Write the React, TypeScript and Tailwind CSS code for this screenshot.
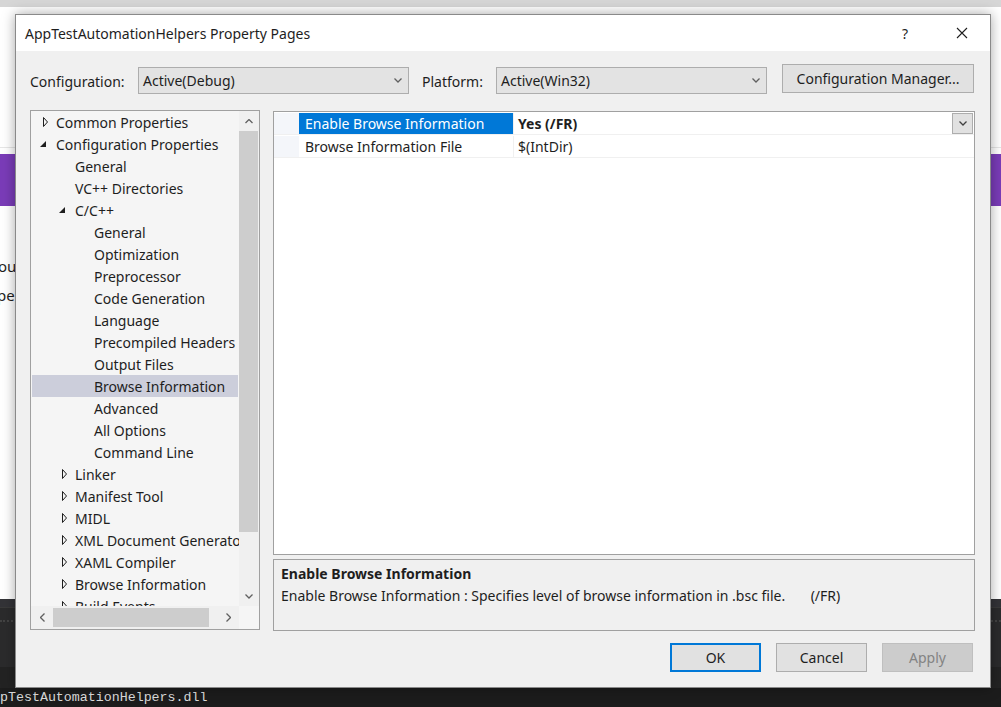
import { FC } from "react";

type TreeItem = {
  label: string;
  level: 0 | 1 | 2;
  arrow?: "open" | "closed";
  selected?: boolean;
};

const tree: TreeItem[] = [
  { label: "Common Properties", level: 0, arrow: "closed" },
  { label: "Configuration Properties", level: 0, arrow: "open" },
  { label: "General", level: 1 },
  { label: "VC++ Directories", level: 1 },
  { label: "C/C++", level: 1, arrow: "open" },
  { label: "General", level: 2 },
  { label: "Optimization", level: 2 },
  { label: "Preprocessor", level: 2 },
  { label: "Code Generation", level: 2 },
  { label: "Language", level: 2 },
  { label: "Precompiled Headers", level: 2 },
  { label: "Output Files", level: 2 },
  { label: "Browse Information", level: 2, selected: true },
  { label: "Advanced", level: 2 },
  { label: "All Options", level: 2 },
  { label: "Command Line", level: 2 },
  { label: "Linker", level: 1, arrow: "closed" },
  { label: "Manifest Tool", level: 1, arrow: "closed" },
  { label: "MIDL", level: 1, arrow: "closed" },
  { label: "XML Document Generator", level: 1, arrow: "closed" },
  { label: "XAML Compiler", level: 1, arrow: "closed" },
  { label: "Browse Information", level: 1, arrow: "closed" },
  { label: "Build Events", level: 1, arrow: "closed" },
];

const indent = ["pl-[8px]", "pl-[27px]", "pl-[46px]"];

const Chevron: FC<{ dir: "up" | "down" | "left" | "right"; color?: string }> = ({ dir, color = "#606060" }) => {
  const paths = {
    down: "M0.5 0.5 L4 4 L7.5 0.5",
    up: "M0.5 4 L4 0.5 L7.5 4",
    left: "M4.5 0.5 L0.5 4.5 L4.5 8.5",
    right: "M0.5 0.5 L4.5 4.5 L0.5 8.5",
  };
  const horizontal = dir === "up" || dir === "down";
  return (
    <svg width={horizontal ? 8 : 5} height={horizontal ? 5 : 9} viewBox={horizontal ? "0 0 8 5" : "0 0 5 9"}>
      <path d={paths[dir]} fill="none" stroke={color} strokeWidth="1.3" />
    </svg>
  );
};

const Arrow: FC<{ kind?: "open" | "closed" }> = ({ kind }) => (
  <svg width="16" height="22" viewBox="0 0 16 22" className="shrink-0">
    {kind === "closed" && <path d="M3.5 6.5 L7.5 11 L3.5 15.5 Z" fill="none" stroke="#1e1e1e" />}
    {kind === "open" && <path d="M6 8 L6 14 L0 14 Z" fill="#1e1e1e" />}
  </svg>
);

const Combo: FC<{ value: string }> = ({ value }) => (
  <div className="mt-[3px] h-[27px] w-[271px] shrink-0 flex items-center justify-between pl-[4px] pr-[6px] bg-[#e3e3e3] border border-[#adadad] text-[#1e1e1e]">
    <span>{value}</span>
    <Chevron dir="down" />
  </div>
);

const Button: FC<{ label: string; variant?: "default" | "primary" | "disabled" }> = ({ label, variant = "default" }) => {
  const cls =
    variant === "primary"
      ? "border-2 border-[#0078d7] bg-[#e1e1e1] text-[#1e1e1e]"
      : variant === "disabled"
        ? "border border-[#bfbfbf] bg-[#cccccc] text-[#838383]"
        : "border border-[#adadad] bg-[#e1e1e1] text-[#1e1e1e]";
  return <div className={`w-[91px] h-[29px] flex items-center justify-center ${cls}`}>{label}</div>;
};

const App: FC = () => {
  return (
    <div className="relative w-[1001px] h-[707px] overflow-hidden bg-white font-['Noto_Sans',sans-serif] text-[14px]">
      {/* desktop behind the dialog */}
      <div className="flex flex-col h-full">
        <div className="h-[7px] bg-[#d6d6d6]" />
        <div className="h-[141px] bg-white border-b border-[#e6e6e6]" />
        <div className="h-[6px] bg-white" />
        <div className="h-[52px] bg-[#7a3cb8]" />
        <div className="flex-1 bg-white pt-[46px] text-[15px] leading-[29px] text-[#1e1e1e]">
          <div className="-ml-[2px]">ou</div>
          <div className="-ml-[3px]">pe</div>
        </div>
        <div className="h-[8px] bg-[#333337]" />
        <div className="h-[60px] bg-[#2b2b2c] border-t border-[#3a3a3a] pt-[12px]">
          <div className="h-[3px] w-full border-t-2 border-dotted border-[#434343]" />
        </div>
        <div className="h-[21px] bg-[#232323]" />
        <div className="h-[19px] bg-[#1c1c1c] text-[#dcdcdc] font-['Liberation_Mono',monospace] text-[13.3px] leading-[19px]">
          pTestAutomationHelpers.dll
        </div>
      </div>

      {/* dialog window */}
      <div className="absolute left-[15px] top-[14px] w-[976px] h-[674px] flex flex-col border border-[#8a8a8a] shadow-[0_0_12px_rgba(0,0,0,0.35)] text-[#1e1e1e]">
        <div className="h-[36px] shrink-0 bg-white flex items-center pl-[9px] pr-[6px]">
          <span className="text-[14px]">AppTestAutomationHelpers Property Pages</span>
          <div className="ml-auto w-[30px] text-center text-[14px]">?</div>
          <div className="w-[20px]" />
          <div className="w-[44px] flex justify-center">
            <svg width="12" height="12" viewBox="0 0 12 12">
              <path d="M1 1 L11 11 M11 1 L1 11" stroke="#1e1e1e" strokeWidth="1.1" />
            </svg>
          </div>
        </div>

        <div className="flex-1 bg-[#f0f0f0] flex flex-col pt-[13px] pl-[14px] pr-[15px] pb-[15px]">
          {/* configuration row */}
          <div className="h-[30px] flex items-start">
            <div className="w-[108px] h-[30px] mt-[2px] flex items-center shrink-0">Configuration:</div>
            <Combo value="Active(Debug)" />
            <div className="ml-[13px] w-[74px] h-[30px] mt-[2px] flex items-center shrink-0">Platform:</div>
            <Combo value="Active(Win32)" />
            <div className="ml-[15px] w-[192px] h-[29px] flex items-center justify-center bg-[#e1e1e1] border border-[#adadad]">
              Configuration Manager...
            </div>
          </div>

          {/* main area */}
          <div className="mt-[16px] h-[521px] flex gap-[13px]">
            {/* tree */}
            <div className="w-[230px] h-[520px] border border-[#a0a0a0] bg-[#f5f5f5] flex flex-col">
              <div className="h-[495px] flex">
                <div className="w-[208px] overflow-hidden">
                  {tree.map((item, i) => (
                    <div
                      key={i}
                      className={`h-[22px] flex items-center whitespace-nowrap mx-[1px] ${indent[item.level]} ${item.selected ? "bg-[#cccedb]" : ""}`}
                    >
                      <Arrow kind={item.arrow} />
                      <span>{item.label}</span>
                    </div>
                  ))}
                </div>
                <div className="w-[20px] flex flex-col bg-[#f0f0f0]">
                  <div className="h-[20px] flex items-center justify-center">
                    <Chevron dir="up" />
                  </div>
                  <div className="h-[401px] w-[19px] bg-[#cdcdcd]" />
                  <div className="flex-1" />
                  <div className="h-[20px] flex items-center justify-center">
                    <Chevron dir="down" />
                  </div>
                </div>
              </div>
              <div className="flex-1 flex bg-[#f0f0f0]">
                <div className="w-[22px] flex items-center justify-center">
                  <Chevron dir="left" />
                </div>
                <div className="w-[156px] my-[2px] bg-[#cdcdcd]" />
                <div className="flex-1 flex items-center justify-end pr-[8px]">
                  <Chevron dir="right" />
                </div>
                <div className="w-[20px] bg-[#f5f5f5]" />
              </div>
            </div>

            {/* property grid + description */}
            <div className="flex-1 mt-[1px] flex flex-col gap-[4px]">
              <div className="h-[444px] border border-[#a0a0a0] bg-white">
                <div className="h-[23px] flex border-b border-[#f0f0f0] pt-[1px]">
                  <div className="w-[25px] bg-[#f4f6fa]" />
                  <div className="w-[214px] bg-[#0078d7] text-white pl-[6px] flex items-center">Enable Browse Information</div>
                  <div className="flex-1 flex items-center pl-[4px] border-l border-[#f0f0f0] font-bold">
                    <span>Yes (/FR)</span>
                    <div className="ml-auto mr-[1px] w-[21px] h-[21px] flex items-center justify-center bg-[#e1e1e1] border border-[#adadad]">
                      <Chevron dir="down" color="#404040" />
                    </div>
                  </div>
                </div>
                <div className="h-[23px] flex border-b border-[#f0f0f0] pt-[1px]">
                  <div className="w-[25px] bg-[#f4f6fa]" />
                  <div className="w-[214px] pl-[6px] flex items-center">Browse Information File</div>
                  <div className="flex-1 flex items-center pl-[4px] border-l border-[#f0f0f0]">$(IntDir)</div>
                </div>
              </div>
              <div className="h-[72px] border border-[#a0a0a0] bg-[#f0f0f0] px-[7px] pt-[3px] leading-[22px]">
                <div className="font-bold">Enable Browse Information</div>
                <div className="whitespace-pre">
                  {"Enable Browse Information : Specifies level of browse information in .bsc file.       (/FR)"}
                </div>
              </div>
            </div>
          </div>

          {/* buttons */}
          <div className="mt-[12px] flex justify-end gap-[15px] mr-[2px]">
            <Button label="OK" variant="primary" />
            <Button label="Cancel" />
            <Button label="Apply" variant="disabled" />
          </div>
        </div>
      </div>
    </div>
  );
};

export default App;
